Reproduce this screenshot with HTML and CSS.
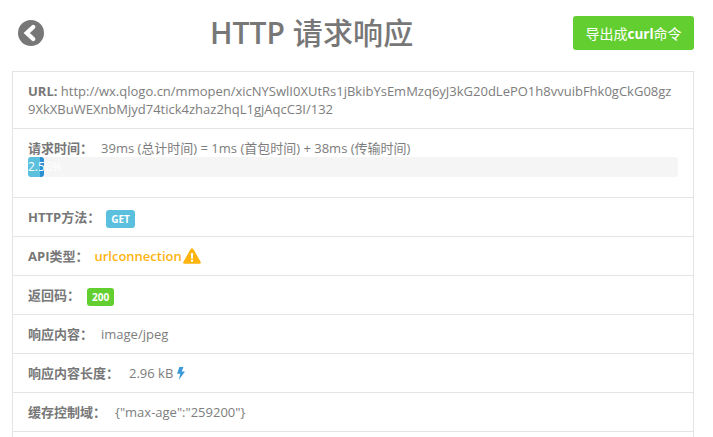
FILE: index.html
```html
<!DOCTYPE html>
<html lang="zh">
<head>
<meta charset="utf-8">
<title>HTTP 请求响应</title>
<link rel="stylesheet" href="styles.css">
</head>
<body>
<div class="page">
  <header class="top">
    <a class="back" href="#" aria-label="返回">
      <svg viewBox="0 0 26 26" width="26" height="26"><circle cx="13" cy="13" r="13" fill="#777"/><path d="M15.200 7 8.800 13l6.400 6" fill="none" stroke="#fff" stroke-width="4.400" stroke-linecap="round"/></svg>
    </a>
    <h1 class="title">HTTP <span class="title-cjk">请求响应</span></h1>
    <a class="export" href="#">导出成<b>curl</b>命令</a>
  </header>
  <ul class="list">
    <li class="item"><b>URL:</b> http://wx.qlogo.cn/mmopen/xicNYSwlI0XUtRs1jBkibYsEmMzq6yJ3kG20dLePO1h8vvuibFhk0gCkG08gz9XkXBuWEXnbMjyd74tick4zhaz2hqL1gjAqcC3I/132</li>
    <li class="item timing">
      <div><b class="label">请求时间：</b>39ms (总计时间) = 1ms (首包时间) + 38ms (传输时间)</div>
      <div class="progress"><div class="bar first" style="width:1.85%">2.56%</div><div class="bar rest" style="width:0.65%"></div></div>
    </li>
    <li class="item"><b class="label gap-6">HTTP方法：</b><span class="badge blue">GET</span></li>
    <li class="item"><b class="label gap-6">API类型：</b><span class="warn">urlconnection</span>
      <svg class="icon" viewBox="0 0 18 16" width="18" height="16"><path d="M9 0.2c.6 0 1 .3 1.300.8l7.400 12.900c.5.9-.1 1.900-1.100 1.900H1.400c-1 0-1.600-1-1.100-1.900L7.700 1c.3-.5.7-.8 1.300-.8z" fill="#ffb30f"/><path d="M7.800 5h2.400l-.3 5.700H8.100zM7.900 11.800h2.200v2H7.900z" fill="#fff"/></svg>
    </li>
    <li class="item"><b class="label gap-7">返回码：</b><span class="badge green">200</span></li>
    <li class="item"><b class="label">响应内容：</b>image/jpeg</li>
    <li class="item"><b class="label gap-10">响应内容长度：</b>2.96 kB
      <svg class="bolt" viewBox="0 0 8 13" width="8" height="13"><path d="M2.400 0h4L4.800 4.400H8L1.800 13l1.400-6.300H0z" fill="#3d9ad9"/></svg>
    </li>
    <li class="item"><b class="label gap-9">缓存控制域：</b>{"max-age":"259200"}</li>
    <li class="item"></li>
  </ul>
</div>
</body>
</html>
```
FILE: styles.css
```css
* { box-sizing: border-box; }
html, body { margin: 0; padding: 0; height: 437px; overflow: hidden; background: #fff; }
body {
  font-family: "Open Sans", "Noto Sans CJK SC", sans-serif;
  font-size: 13px;
  line-height: 18px;
  color: #7d7d7d;
}
b { color: #777; font-weight: 700; }
.page { padding: 0 19px 0 12px; }
.top {
  display: flex;
  align-items: center;
  justify-content: space-between;
  height: 71px;
  position: relative;
}
.back { display: flex; margin-left: 6px; margin-top: -6px; }
.title {
  margin: -6px 0 0;
  font-size: 30px;
  line-height: 36px;
  font-weight: 600;
  color: #777;
  position: absolute;
  left: 198px;
}
.title-cjk { font-weight: 500; letter-spacing: 0.2px; }
.export {
  margin-top: -5px;
  width: 121px;
  height: 34px;
  background: #63ce30;
  border-radius: 3px;
  color: #fff;
  font-size: 14px;
  line-height: 35px;
  text-align: center;
  text-decoration: none;
}
.export b { color: #fff; font-size: 13.500px; }
.list { list-style: none; margin: 0; padding: 0; border: 1px solid #e4e4e4; border-bottom: 0; }
.item { padding: 10px 15px; border-bottom: 1px solid #e4e4e4; min-height: 39px; word-break: break-all; }
.label { margin-right: 8px; }
.gap-6 { margin-right: 6px; }
.gap-7 { margin-right: 7px; }
.gap-9 { margin-right: 9px; }
.gap-10 { margin-right: 10px; }
.progress { display: flex; height: 20px; background: #f5f5f5; border-radius: 3px; margin-bottom: 10px; font-size: 12px; line-height: 20px; color: #fff; }
.bar { white-space: nowrap; }
.first { position: relative; z-index: 1; background: #5bc0de; border-radius: 3px 0 0 3px; }
.rest { background: #2b8fd6; border-radius: 0 3px 3px 0; }
.badge { display: inline-block; padding: 0 5px; height: 18px; line-height: 18px; border-radius: 3px; color: #fff; font-size: 10px; font-weight: 700; vertical-align: top; transform: translateY(2px); }
.blue { background: #5bc0de; }
.green { background: #63ce30; }
.warn { color: #ffb30f; font-size: 13px; font-weight: 600; }
.icon { vertical-align: -3px; margin-left: -2px; }
.bolt { vertical-align: -2px; }
```
